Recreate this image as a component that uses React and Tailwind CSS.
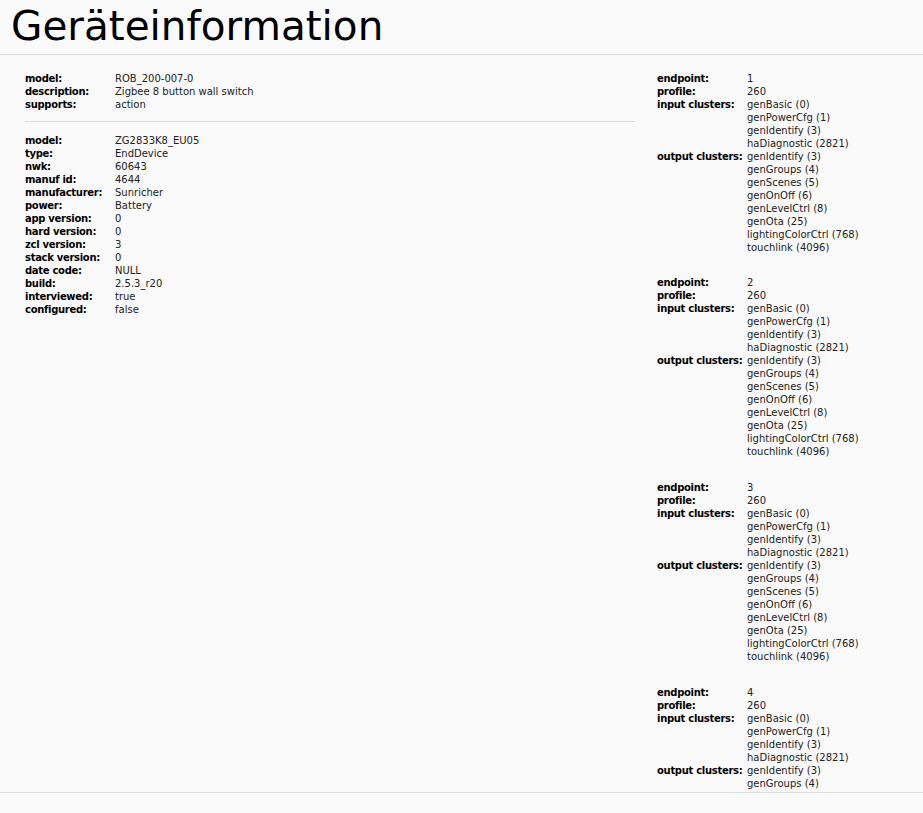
import React from 'react';

const device = [
  ['model', 'ROB_200-007-0'],
  ['description', 'Zigbee 8 button wall switch'],
  ['supports', 'action'],
];

const info = [
  ['model', 'ZG2833K8_EU05'],
  ['type', 'EndDevice'],
  ['nwk', '60643'],
  ['manuf id', '4644'],
  ['manufacturer', 'Sunricher'],
  ['power', 'Battery'],
  ['app version', '0'],
  ['hard version', '0'],
  ['zcl version', '3'],
  ['stack version', '0'],
  ['date code', 'NULL'],
  ['build', '2.5.3_r20'],
  ['interviewed', 'true'],
  ['configured', 'false'],
];

const inputClusters = ['genBasic (0)', 'genPowerCfg (1)', 'genIdentify (3)', 'haDiagnostic (2821)'];
const outputClusters = [
  'genIdentify (3)',
  'genGroups (4)',
  'genScenes (5)',
  'genOnOff (6)',
  'genLevelCtrl (8)',
  'genOta (25)',
  'lightingColorCtrl (768)',
  'touchlink (4096)',
];

function Row({ label, children }) {
  return (
    <div className="flex">
      <div className="w-[90px] shrink-0 font-bold text-black whitespace-nowrap tracking-[-0.3px]">{label}:</div>
      <div className="text-[#222]">{children}</div>
    </div>
  );
}

function Endpoint({ id, outputs = outputClusters }) {
  return (
    <div className="mb-[23px]">
      <Row label="endpoint">{id}</Row>
      <Row label="profile">260</Row>
      <Row label="input clusters">
        {inputClusters.map(c => <div key={c}>{c}</div>)}
      </Row>
      <Row label="output clusters">
        {outputs.map(c => <div key={c}>{c}</div>)}
      </Row>
    </div>
  );
}

export default function App() {
  return (
    <div className="h-[813px] bg-[#fafafa] flex flex-col overflow-hidden" style={{ fontFamily: '"DejaVu Sans", sans-serif' }}>
      <div className="h-[55px] shrink-0 border-b border-[#dedede] pl-[11px] pt-[2px]">
        <h1 className="text-[40.5px] leading-[48px] text-black">Geräteinformation</h1>
      </div>
      <div className="h-[737px] shrink-0 overflow-hidden flex text-[10px] leading-[13px] pt-[17px]">
        <div className="w-[610px] ml-[25px] shrink-0">
          {device.map(([k, v]) => <Row key={k} label={k}>{v}</Row>)}
          <div className="border-b border-[#dedede] mt-[10px] mb-[12px]"></div>
          {info.map(([k, v]) => <Row key={k} label={k}>{v}</Row>)}
        </div>
        <div className="ml-[22px]">
          <Endpoint id={1} />
          <div className="-mt-[1px]"><Endpoint id={2} /></div>
          <Endpoint id={3} />
          <Endpoint id={4} outputs={outputClusters.slice(0, 2)} />
        </div>
      </div>
      <div className="flex-1 border-t border-[#dedede]"></div>
    </div>
  );
}
